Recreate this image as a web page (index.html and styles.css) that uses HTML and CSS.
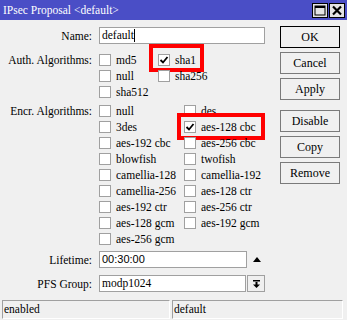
FILE: index.html
```html
<!DOCTYPE html>
<html>
<head>
<meta charset="utf-8">
<link rel="stylesheet" href="styles.css">
</head>
<body>
<div class="window">
  <div class="titlebar">
    <span class="title">IPsec Proposal &lt;default&gt;</span>
    <div class="tb-btns">
      <span class="tb-btn"><svg width="12" height="11" viewBox="0 0 12 11"><rect x="1" y="1" width="10" height="9" fill="none" stroke="#000" stroke-width="1"/><rect x="1" y="1" width="10" height="2" fill="#000"/></svg></span>
      <span class="tb-btn"><svg width="12" height="11" viewBox="0 0 12 11"><path d="M2 1.5 L10 9.5 M10 1.5 L2 9.5" stroke="#000" stroke-width="2.2"/></svg></span>
    </div>
  </div>
  <div class="main">
    <div class="form">
      <div class="row row-name">
        <span class="lbl">Name:</span>
        <div class="input name-input">default<span class="caret"></span></div>
      </div>
      <div class="row row-auth">
        <span class="lbl">Auth. Algorithms:</span>
        <div class="checks auth">
          <div class="chk"><span class="box"></span>md5</div>
          <div class="chk mark-sha1"><span class="box"><svg width="10" height="10" viewBox="0 0 10 10"><path d="M1.5 5 L4 7.5 L8.5 2" fill="none" stroke="#000" stroke-width="1.8"/></svg></span>sha1</div>
          <div class="chk"><span class="box"></span>null</div>
          <div class="chk"><span class="box"></span>sha256</div>
          <div class="chk"><span class="box"></span>sha512</div>
        </div>
      </div>
      <div class="row row-encr">
        <span class="lbl">Encr. Algorithms:</span>
        <div class="checks encr">
          <div class="chk"><span class="box"></span>null</div>
          <div class="chk"><span class="box"></span>des</div>
          <div class="chk"><span class="box"></span>3des</div>
          <div class="chk mark-aes"><span class="box"><svg width="10" height="10" viewBox="0 0 10 10"><path d="M1.5 5 L4 7.5 L8.5 2" fill="none" stroke="#000" stroke-width="1.8"/></svg></span>aes-128 cbc</div>
          <div class="chk"><span class="box"></span>aes-192 cbc</div>
          <div class="chk"><span class="box"></span>aes-256 cbc</div>
          <div class="chk"><span class="box"></span>blowfish</div>
          <div class="chk"><span class="box"></span>twofish</div>
          <div class="chk"><span class="box"></span>camellia-128</div>
          <div class="chk"><span class="box"></span>camellia-192</div>
          <div class="chk"><span class="box"></span>camellia-256</div>
          <div class="chk"><span class="box"></span>aes-128 ctr</div>
          <div class="chk"><span class="box"></span>aes-192 ctr</div>
          <div class="chk"><span class="box"></span>aes-256 ctr</div>
          <div class="chk"><span class="box"></span>aes-128 gcm</div>
          <div class="chk"><span class="box"></span>aes-192 gcm</div>
          <div class="chk"><span class="box"></span>aes-256 gcm</div>
        </div>
      </div>
      <div class="row row-life">
        <span class="lbl">Lifetime:</span>
        <div class="input life-input">00:30:00</div>
        <span class="tri-up"></span>
      </div>
      <div class="row row-pfs">
        <span class="lbl">PFS Group:</span>
        <div class="input pfs-input">modp1024</div>
        <span class="dd-btn"><svg width="9" height="10" viewBox="0 0 9 10"><rect x="1" y="1" width="7" height="1.5" fill="#000"/><rect x="3.5" y="3" width="2" height="3" fill="#000"/><path d="M1 5.5 L8 5.5 L4.5 9 Z" fill="#000"/></svg></span>
      </div>
    </div>
    <div class="buttons">
      <div class="btn btn-default">OK</div>
      <div class="btn">Cancel</div>
      <div class="btn">Apply</div>
      <div class="btn btn-sep">Disable</div>
      <div class="btn">Copy</div>
      <div class="btn">Remove</div>
    </div>
  </div>
  <div class="status">
    <div class="panel panel-left">enabled</div>
    <div class="panel panel-right">default</div>
  </div>
</div>
</body>
</html>
```
FILE: styles.css
```css
html, body {
  margin: 0;
  padding: 0;
  background: #f0f0f0;
}
.window {
  width: 347px;
  height: 320px;
  display: flex;
  flex-direction: column;
  font-family: "Liberation Serif", "Times New Roman", serif;
  font-size: 11.5px;
  color: #000;
  background: #f0f0f0;
  overflow: hidden;
}
.titlebar {
  height: 20px;
  background: #4a4ec6;
  display: flex;
  align-items: center;
  justify-content: space-between;
  padding: 0 2px 0 3px;
  flex: none;
}
.title {
  color: #fff;
  font-size: 11.5px;
}
.tb-btns {
  display: flex;
  gap: 1px;
}
.tb-btn {
  width: 14px;
  height: 13px;
  border: 1px solid #000;
  background: #e4e4e4;
  display: flex;
  align-items: center;
  justify-content: center;
}
.main {
  height: 280px;
  display: flex;
  flex: none;
}
.form {
  width: 280px;
  display: flex;
  flex-direction: column;
}
.row {
  display: flex;
  align-items: flex-start;
}
.lbl {
  width: 92px;
  margin-right: 7px;
  text-align: right;
  flex: none;
  white-space: nowrap;
}
.row-name {
  margin-top: 7px;
  height: 17px;
  align-items: center;
}
.input {
  height: 15px;
  border: 1px solid #a0a0a0;
  background: #fff;
  padding-left: 2px;
  line-height: 15px;
  box-sizing: content-box;
  white-space: nowrap;
  display: flex;
  align-items: center;
}
.name-input {
  width: 162px;
}
.caret {
  width: 1px;
  height: 13px;
  background: #000;
}
.row-auth {
  margin-top: 8px;
}
.row-auth .lbl,
.row-encr .lbl {
  line-height: 16px;
}
.row-encr {
  margin-top: 3px;
}
.checks {
  display: grid;
  grid-auto-rows: 16px;
}
.checks.auth {
  grid-template-columns: 59px auto;
}
.checks.encr {
  grid-template-columns: 85px auto;
}
.chk {
  display: flex;
  align-items: center;
  gap: 5px;
  white-space: nowrap;
  position: relative;
}
.box {
  width: 10px;
  height: 10px;
  border: 1px solid #a0a0a0;
  background: #fff;
  display: flex;
  align-items: center;
  justify-content: center;
  flex: none;
}
.mark-sha1::after,
.mark-aes::after {
  content: "";
  position: absolute;
  border: 4px solid #ff0000;
  box-sizing: border-box;
}
.mark-sha1::after {
  left: -9px;
  top: -8px;
  width: 55px;
  height: 28px;
}
.mark-aes::after {
  left: -7px;
  top: -6px;
  width: 88px;
  height: 27px;
}
.row-life {
  margin-top: 4px;
  height: 17px;
  align-items: center;
}
.life-input {
  width: 144px;
  font-family: "Liberation Sans", Arial, sans-serif;
  font-size: 11px;
}
.tri-up {
  width: 0;
  height: 0;
  border-left: 4px solid transparent;
  border-right: 4px solid transparent;
  border-bottom: 5px solid #000;
  margin-left: 6px;
}
.row-pfs {
  margin-top: 7px;
  height: 17px;
  align-items: center;
}
.pfs-input {
  width: 143px;
}
.dd-btn {
  width: 16px;
  height: 15px;
  border: 1px solid #a0a0a0;
  margin-left: 1px;
  display: flex;
  align-items: center;
  justify-content: center;
}
.buttons {
  width: 60px;
  padding-top: 6px;
  display: flex;
  flex-direction: column;
  gap: 4px;
}
.btn {
  height: 20px;
  border: 1px solid #7a7a7a;
  display: flex;
  align-items: center;
  justify-content: center;
  font-size: 12px;
}
.btn-default {
  border-color: #000;
}
.btn-sep {
  margin-top: 6px;
}
.status {
  height: 20px;
  display: flex;
  gap: 2px;
  padding-left: 2px;
  flex: none;
}
.panel {
  height: 19px;
  border-top: 1px solid #a0a0a0;
  border-left: 1px solid #a0a0a0;
  border-right: 1px solid #fff;
  border-bottom: 1px solid #fff;
  padding-left: 1px;
  line-height: 17px;
  box-sizing: border-box;
}
.panel-left {
  width: 168px;
}
.panel-right {
  width: 171px;
}
```
